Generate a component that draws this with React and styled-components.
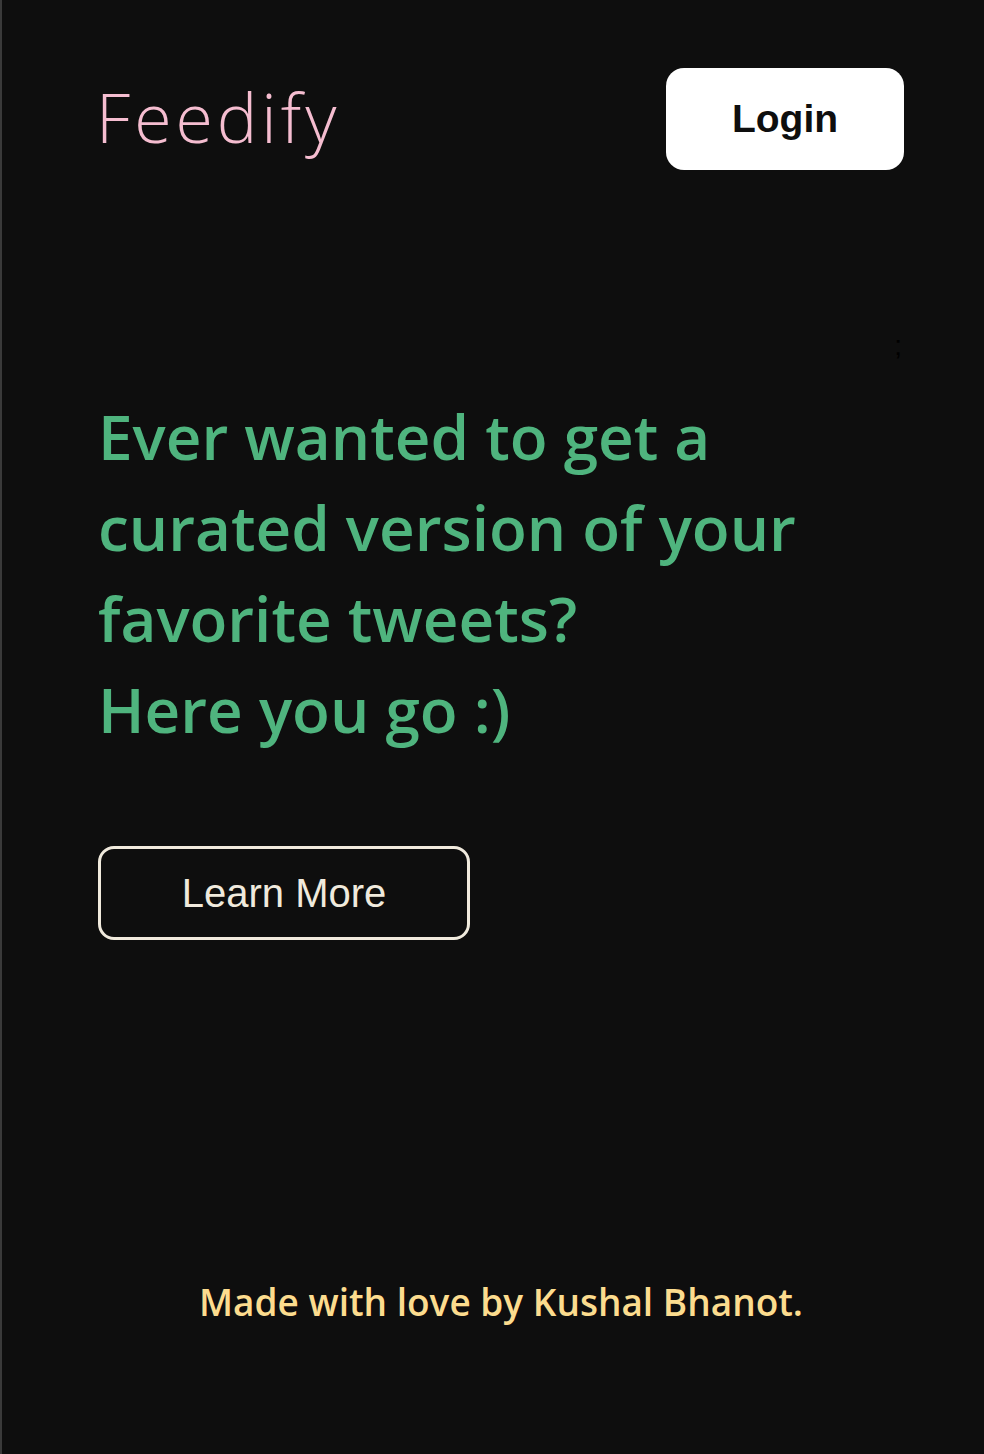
import React from 'react'
import styled, { createGlobalStyle } from 'styled-components'

const Global = createGlobalStyle`
    html, body {
        margin: 0;
        padding: 0;
        background: #0e0e0e;
    }
    * { box-sizing: border-box; }
`

const Page = styled.div`
    min-height: 1454px;
    background: #0e0e0e;
    border-left: 2px solid #3a3a3a;
    padding: 68px 80px 0 96px;
    display: flex;
    flex-direction: column;
`

const Header = styled.header`
    display: flex;
    align-items: center;
    justify-content: space-between;
`

const Logo = styled.h1`
    margin: -6px 0 0 -2px;
    font-family: "Open Sans", sans-serif;
    font-weight: 300;
    font-size: 68px;
    letter-spacing: 4px;
    color: #f5bdd0;
`

const LoginButton = styled.button`
    width: 238px;
    height: 102px;
    border: none;
    border-radius: 18px;
    background: #ffffff;
    color: #0e0e0e;
    font-family: "Liberation Sans", Arial, sans-serif;
    font-weight: 700;
    font-size: 39px;
    cursor: pointer;
`

const Stray = styled.div`
    margin-top: 162px;
    height: 28px;
    padding-right: 2px;
    text-align: right;
    font-family: "Liberation Sans", sans-serif;
    font-size: 28px;
    line-height: 28px;
    color: #000;
`

const Heading = styled.h2`
    margin: 31px 0 0;
    font-family: "Open Sans", sans-serif;
    font-weight: 600;
    font-size: 62px;
    line-height: 91px;
    color: #4fb47e;
`

const LearnButton = styled.button`
    align-self: flex-start;
    margin-top: 91px;
    width: 372px;
    height: 94px;
    border: 3px solid #f0eadd;
    border-radius: 16px;
    background: transparent;
    color: #f0eadd;
    font-family: "Liberation Sans", Arial, sans-serif;
    font-size: 40px;
    cursor: pointer;
`

const Footer = styled.footer`
    margin-top: 337px;
    text-align: center;
    font-family: "Open Sans", sans-serif;
    font-weight: 600;
    font-size: 37px;
    line-height: 50px;
    color: #fcdc8e;
`

export default function App() {
    return (
        <Page>
            <Global />
            <Header>
                <Logo>Feedify</Logo>
                <LoginButton>Login</LoginButton>
            </Header>
            <Stray>;</Stray>
            <Heading>
                Ever wanted to get a<br />
                curated version of your<br />
                favorite tweets?<br />
                Here you go :)
            </Heading>
            <LearnButton>Learn More</LearnButton>
            <Footer>Made with love by Kushal Bhanot.</Footer>
        </Page>
    )
}
